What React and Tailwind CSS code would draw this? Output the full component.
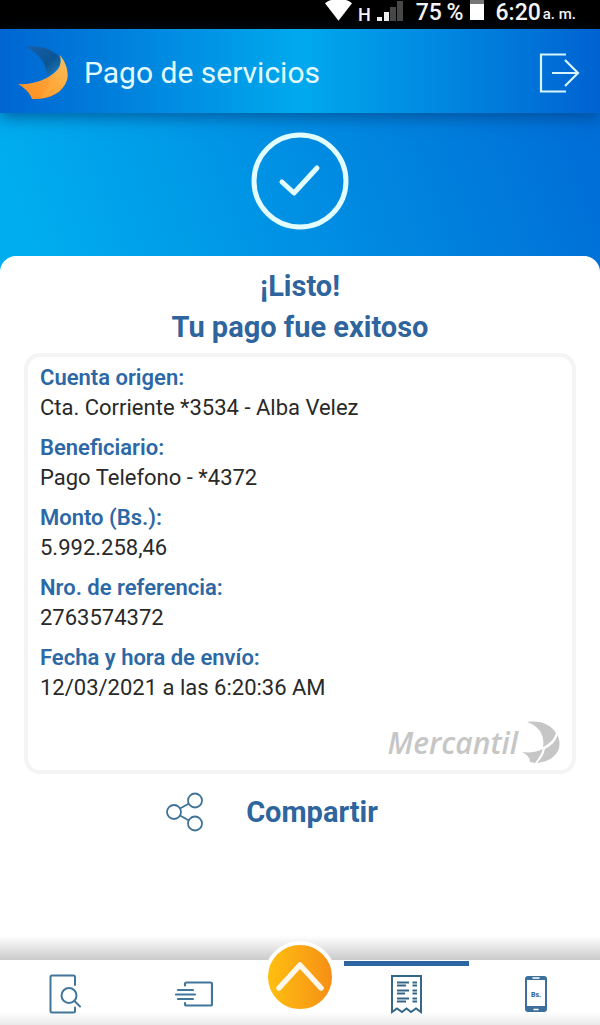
import React from 'react';

const details = [
    { label: 'Cuenta origen:', value: 'Cta. Corriente *3534 - Alba Velez' },
    { label: 'Beneficiario:', value: 'Pago Telefono - *4372' },
    { label: 'Monto (Bs.):', value: '5.992.258,46' },
    { label: 'Nro. de referencia:', value: '2763574372' },
    { label: 'Fecha y hora de envío:', value: '12/03/2021 a las 6:20:36 AM' },
];

const StatusBar = () => (
    <div className="flex h-[29px] items-start justify-end bg-black pr-6 text-[23px] leading-[26px] font-medium text-gray-100">
        <svg width="27" height="22" viewBox="0 0 28 22" fill="#fff" aria-hidden="true">
            <path d="M0 3C7-3 21-3 28 3L14 21Z" />
        </svg>
        <span className="ml-1.5 text-[18px] leading-[29px]">H</span>
        <svg className="ml-1.5" width="27" height="22" viewBox="0 0 27 22" aria-hidden="true">
            <path d="M0 17h5v4H0zM7 12h5v9H7z" fill="#eee" />
            <path d="M13 7h6v14h-6zM20 1h6v20h-6z" fill="#484848" />
        </svg>
        <span className="ml-3">75&thinsp;%</span>
        <svg className="ml-1.5" width="14" height="22" viewBox="0 0 14 22" aria-hidden="true">
            <path d="M0 0h14v4H0z" fill="#777" />
            <path d="M0 4h14v16H0z" fill="#fff" />
        </svg>
        <span className="ml-3">6:20</span>
        <span className="ml-0.5 text-[15px] leading-[29px]">a. m.</span>
    </div>
);

const Logo = () => (
    <svg width="50" height="54" viewBox="0 0 50 54" aria-hidden="true">
        <defs>
            <linearGradient id="logoBlue" x1="0" y1="0" x2="1" y2="1">
                <stop offset="0" stopColor="#175fa9" />
                <stop offset=".6" stopColor="#0b5594" />
                <stop offset="1" stopColor="#287cae" />
            </linearGradient>
            <linearGradient id="logoOrange" x1="0" y1="1" x2="1" y2="0">
                <stop offset="0" stopColor="#ff8b1d" />
                <stop offset=".55" stopColor="#ffa338" />
                <stop offset="1" stopColor="#efc66c" />
            </linearGradient>
        </defs>
        <path d="M8 1C24-1 36 4 42 12C44 17 38 24 29 30C29 18 20 6 8 1Z" fill="url(#logoBlue)" />
        <path d="M42 9C48 17 51 26 49 34C45 47 31 54 14 53C12 47 7 42 0 38C14 39 28 34 36 27C42 22 44 17 42 9Z" fill="url(#logoOrange)" />
        <path d="M22 52C27 46 31 40 34 29C42 24 44 19 42 9C48 17 51 26 49 34C45 44 36 50 22 52Z" fill="#ffb64b" opacity=".35" />
    </svg>
);

const Header = () => (
    <header className="relative flex h-[84px] items-center bg-linear-to-r from-[#0065d2] via-[#00a9ed] to-[#0062d1] pt-1 pr-5 pl-[18px] shadow-[0_5px_14px_rgba(0,60,120,0.6)]">
        <Logo />
        <h1 className="ml-4 flex-1 text-[30px] leading-9 text-[#e3fbff]">Pago de servicios</h1>
        <button type="button" aria-label="Salir">
            <svg width="41" height="40" viewBox="0 0 41 40" fill="none" stroke="#d5f6ff" strokeWidth="2.2" aria-hidden="true">
                <path d="M27 1.5H2V38.5H27M13 20H39M26 7L39 20L26 33" />
            </svg>
        </button>
    </header>
);

const MercantilMark = () => (
    <div className="flex items-center justify-end gap-1 text-[#c6c6c6]">
        <span className="font-['Open_Sans',sans-serif] text-[30px] leading-10 font-semibold italic">Mercantil</span>
        <svg width="38" height="43" viewBox="0 0 38 43" aria-hidden="true">
            <path d="M5 1C19-1 29 4 34 12C32 19 27 23 21 26C23 14 17 5 5 1Z" fill="currentColor" />
            <path d="M35.500 14C39 22 38 30 32 35C28 39 22 41 15 42C19 38 22 33 23 28C29 25 34 20 35.500 14Z" fill="currentColor" />
            <path d="M0 31C8 32 15 31 21 28C19 34 16 38 13 42L8 41C8 36 4 33 0 31Z" fill="currentColor" />
        </svg>
    </div>
);

const Receipt = () => (
    <section className="mx-6 mt-[5px] rounded-2xl border-4 border-[#f4f4f4] px-3 py-1.5">
        <dl className="flex flex-col gap-2.5 text-[22px] leading-[30px]">
            {details.map((item) => (
                <div key={item.label}>
                    <dt className="font-semibold text-[#2c68a5]">{item.label}</dt>
                    <dd className="text-[#292929]">{item.value}</dd>
                </div>
            ))}
        </dl>
        <div className="mt-[18px]">
            <MercantilMark />
        </div>
    </section>
);

const navIcon = 'flex flex-1 justify-center pt-[14px]';

const BottomNav = () => (
    <nav className="mt-auto">
        <div className="h-6 bg-linear-to-b from-white to-[#cbcbcb]" />
        <div className="flex h-[65px] bg-linear-to-b from-white from-80% to-[#e9e9e9]">
            <a href="#consultas" aria-label="Consultas" className={navIcon}>
                <svg width="32" height="40" viewBox="0 0 32 40" fill="none" stroke="#43769b" strokeWidth="2" strokeLinecap="round" aria-hidden="true">
                    <path d="M26 11V3Q26 1.500 24.500 1.500H3Q1.500 1.500 1.500 3V37Q1.500 38.500 3 38.500H24.500Q26 38.500 26 37V33.500" />
                    <circle cx="20" cy="21.500" r="7.500" />
                    <path d="M25.500 27L31 32.500" />
                </svg>
            </a>
            <a href="#transferencias" aria-label="Transferencias" className={navIcon}>
                <svg width="38" height="40" viewBox="0 0 38 40" fill="none" stroke="#43769b" strokeWidth="2.2" strokeLinecap="round" aria-hidden="true">
                    <path d="M10 11.500V10Q10 8.500 11.500 8.500H35.500Q37 8.500 37 10V30Q37 31.500 35.500 31.500H11.500Q10 31.500 10 30V29" />
                    <path d="M3 16H18M1 20.500H20M3 25H18" />
                </svg>
            </a>
            <div className="flex w-[84px] justify-center">
                <button type="button" aria-label="Menú" className="relative -mt-[19px] size-[72px] rounded-full border-4 border-white bg-linear-to-r from-[#ffc20e] to-[#f58c16] bg-origin-border">
                    <svg className="size-16" viewBox="0 0 64 64" fill="none" stroke="#fff8ea" strokeWidth="5.500" strokeLinecap="round" strokeLinejoin="round" aria-hidden="true">
                        <path d="M11 43L32 20L53 43" />
                    </svg>
                </button>
            </div>
            <a href="#pagos" aria-label="Pagos" aria-current="page" className="flex flex-1 flex-col items-center">
                <span className="mx-0.5 mt-px h-[5px] self-stretch bg-[#2c65a1]" />
                <svg className="mt-2" width="33" height="40" viewBox="0 0 33 40" fill="none" stroke="#356789" strokeWidth="2" aria-hidden="true">
                    <path d="M2 38V2H31V38L26 34.500L21 38L16.500 34.500L12 38L7 34.500Z" />
                    <path d="M7 8.500H19M7 11.500H16M7 16.500H19M7 19.500H15M7 24.500H19M7 27.500H16M22.500 8.500H27M22.500 11.500H27M22.500 16.500H27M22.500 19.500H27M22.500 24.500H27M22.500 27.500H27" strokeWidth="2.2" />
                </svg>
            </a>
            <a href="#pago-movil" aria-label="Pago móvil" className={navIcon}>
                <svg width="24" height="40" viewBox="0 0 24 40" aria-hidden="true">
                    <rect x="1" y="2" width="22" height="36" rx="3" fill="#3d719b" />
                    <path d="M3 6H21V32H3Z" fill="#fff" />
                    <path d="M9 4H15M10 35.500H14" stroke="#fff" strokeWidth="1.500" strokeLinecap="round" />
                    <text x="12" y="23" textAnchor="middle" fontSize="7" fontWeight="900" fill="#3d719b">Bs.</text>
                </svg>
            </a>
        </div>
    </nav>
);

const App = () => {
    return (
        <div className="flex min-h-screen flex-col bg-white font-[Roboto,sans-serif]">
            <StatusBar />
            <Header />
            <main>
                <div className="bg-linear-[70deg] from-[#00aeef] from-5% to-[#006cd6]">
                    <div className="flex justify-center pt-[19px] pb-[26px]">
                        <svg width="98" height="98" viewBox="0 0 98 98" fill="none" stroke="#e3fcff" strokeLinecap="round" strokeLinejoin="round" aria-hidden="true">
                            <circle cx="49" cy="49" r="46" strokeWidth="5" />
                            <path d="M31 50L43 61L66 36" strokeWidth="5" />
                        </svg>
                    </div>
                    <div className="h-4 rounded-t-2xl bg-white" />
                </div>
                <h2 className="-mt-1.5 text-center text-[29px] leading-[41px] font-bold text-[#2f659d]">
                    ¡Listo!<br />Tu pago fue exitoso
                </h2>
                <Receipt />
                <div className="flex justify-center pt-[18px] pr-14">
                    <button type="button" className="flex items-center gap-[43px] text-[29px] leading-10 font-bold text-[#2f659d]">
                        <svg width="37" height="40" viewBox="0 0 37 40" fill="none" stroke="#3f7396" strokeWidth="1.800" aria-hidden="true">
                            <circle cx="8" cy="20" r="7" />
                            <circle cx="29" cy="8.500" r="7" />
                            <circle cx="29" cy="31.500" r="7" />
                            <path d="M14 16.500L23 11.500M14 23.500L23 28.500" />
                        </svg>
                        Compartir
                    </button>
                </div>
            </main>
            <BottomNav />
        </div>
    );
};

export default App;
